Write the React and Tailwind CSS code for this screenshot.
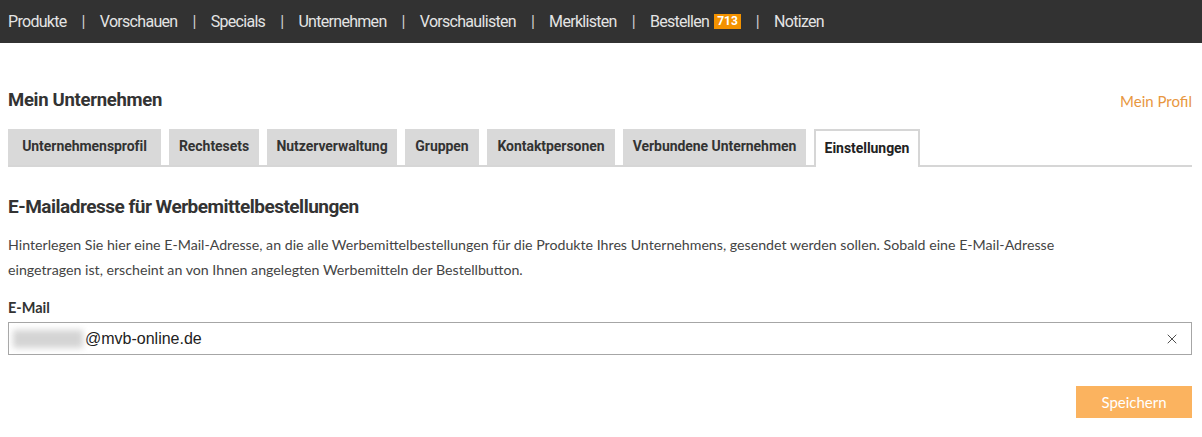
import React from "react";
import { X } from "lucide-react";

const NAV = ["Produkte", "Vorschauen", "Specials", "Unternehmen", "Vorschaulisten", "Merklisten", "Bestellen", "Notizen"];

const TABS = [
  { label: "Unternehmensprofil", w: "w-[153px]" },
  { label: "Rechtesets", w: "w-[90px]" },
  { label: "Nutzerverwaltung", w: "w-[130px]" },
  { label: "Gruppen", w: "w-[74px]" },
  { label: "Kontaktpersonen", w: "w-[128px]" },
  { label: "Verbundene Unternehmen", w: "w-[183px]" },
];

const cond = { fontFamily: "Roboto, 'Liberation Sans', sans-serif" };
const body = { fontFamily: "Lato, 'Open Sans', sans-serif" };

export default function App() {
  return (
    <div className="min-h-[437px] bg-white text-[#333]">
      {/* top nav */}
      <nav className="flex h-[43px] items-center bg-[#323232] pl-2 text-[16px] tracking-[-0.7px] text-[#e4e4e4]" style={cond}>
        {NAV.map((item, i) => (
          <React.Fragment key={item}>
            {i > 0 && <span className="mx-[15px] text-[#cfcfcf]">|</span>}
            <span className="flex items-center">
              {item}
              {item === "Bestellen" && (
                <span className="ml-[5px] bg-[#f39200] px-[3px] text-[12px] font-bold leading-[15px] tracking-normal text-white">713</span>
              )}
            </span>
          </React.Fragment>
        ))}
      </nav>

      <main className="pl-2 pr-[10px]">
        <div className="mt-[44px] flex items-center justify-between">
          <h1 className="text-[18.5px] font-bold tracking-[-0.3px]" style={cond}>Mein Unternehmen</h1>
          <a className="text-[15px] text-[#e8973f]" style={body}>Mein Profil</a>
        </div>

        {/* tabs */}
        <div className="mt-[14px] flex gap-2 border-b-2 border-[#d6d6d6] text-[14px] font-bold tracking-[-0.05px]" style={cond}>
          {TABS.map((t) => (
            <div key={t.label} className={`${t.w} flex h-[36px] items-center justify-center bg-[#d9d9d9] text-[#333]`}>
              {t.label}
            </div>
          ))}
          <div className="-mb-[2px] flex h-[38px] w-[106px] items-center justify-center border-2 border-b-0 border-[#d6d6d6] bg-white text-[#222]">
            Einstellungen
          </div>
        </div>

        <h2 className="mt-[26px] text-[19px] font-bold tracking-[-0.5px]" style={cond}>E-Mailadresse für Werbemittelbestellungen</h2>

        <p className="mt-[11px] text-[14.2px] leading-[25px] text-[#444]" style={body}>
          Hinterlegen Sie hier eine E-Mail-Adresse, an die alle Werbemittelbestellungen für die Produkte Ihres Unternehmens, gesendet werden sollen. Sobald eine E-Mail-Adresse
          <br />
          eingetragen ist, erscheint an von Ihnen angelegten Werbemitteln der Bestellbutton.
        </p>

        <label className="mt-[15px] block text-[14.5px] font-bold text-[#333]" style={body}>E-Mail</label>
        <div className="mt-[3px] flex h-[33px] items-center border border-[#a6a6a6] bg-white pr-[11px]">
          <span className="flex flex-1 items-center text-[16px] text-[#222]" style={{ fontFamily: "'Liberation Sans', Arial, sans-serif" }}>
            <span className="ml-[4px] mr-[2px] inline-block h-[18px] w-[70px] bg-[#d4d4d4] blur-[3px]" />
            @mvb-online.de
          </span>
          <X size={16} strokeWidth={1.3} className="text-[#333]" />
        </div>

        <div className="mt-[31px] flex justify-end">
          <button className="h-[32px] w-[116px] bg-[#fbb35f] text-[15px] text-white" style={body}>Speichern</button>
        </div>
      </main>
    </div>
  );
}
